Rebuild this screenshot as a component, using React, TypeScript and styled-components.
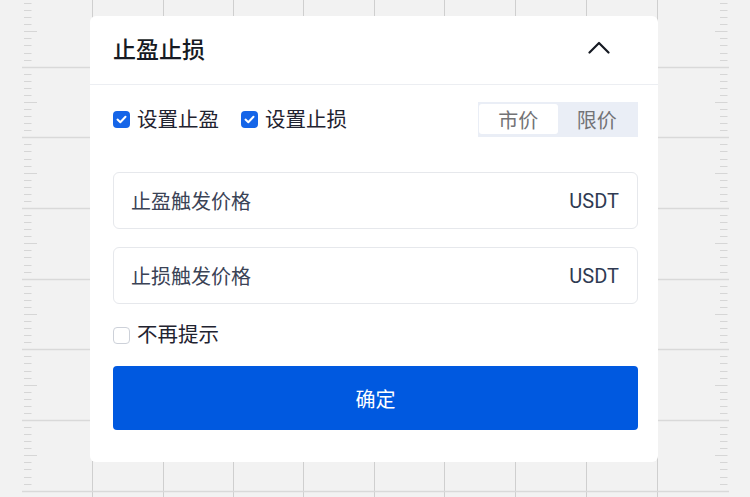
import { useState } from 'react';
import styled, { createGlobalStyle } from 'styled-components';

const GlobalStyle = createGlobalStyle`
  html, body {
    margin: 0;
    padding: 0;
    background: #f2f2f2;
  }
  body {
    font-family: Roboto, 'Noto Sans CJK SC', sans-serif;
  }
`;

const Stage = styled.div`
  position: relative;
  width: 750px;
  height: 497px;
  overflow: hidden;
  background: #f2f2f2;
  padding: 16px 0 0 90px;
  box-sizing: border-box;
`;

const ChartBack = styled.svg`
  position: absolute;
  inset: 0;
  width: 750px;
  height: 497px;
`;

const Card = styled.section`
  position: relative;
  width: 568px;
  background: #ffffff;
  border-radius: 6px;
  box-sizing: border-box;
`;

const Header = styled.header`
  height: 69px;
  display: flex;
  align-items: center;
  justify-content: space-between;
  padding: 0 48px 5px 23px;
  box-sizing: border-box;
  border-bottom: 1px solid #eceef2;
`;

const Title = styled.h1`
  margin: 0;
  font-size: 23px;
  font-weight: 500;
  color: #161a23;
  letter-spacing: 0;
`;

const Collapse = styled.button`
  border: none;
  background: none;
  padding: 0;
  width: 22px;
  height: 14px;
  display: flex;
  align-items: center;
  justify-content: center;
  cursor: pointer;
`;

const Body = styled.div`
  display: flex;
  flex-direction: column;
  padding: 17px 20px 32px 23px;
`;

const OptionsRow = styled.div`
  height: 35px;
  display: flex;
  align-items: center;
  justify-content: space-between;
`;

const Checks = styled.div`
  display: flex;
  align-items: center;
  gap: 22px;
`;

const CheckItem = styled.label`
  display: flex;
  align-items: center;
  gap: 7px;
  font-size: 20.5px;
  line-height: 20px;
  color: #1f2330;
  cursor: pointer;
  user-select: none;
`;

const Box = styled.span<{ $on: boolean }>`
  width: 17px;
  height: 17px;
  box-sizing: border-box;
  border-radius: 4px;
  display: flex;
  align-items: center;
  justify-content: center;
  background: ${(p) => (p.$on ? '#1565e8' : '#ffffff')};
  border: ${(p) => (p.$on ? 'none' : '1.5px solid #cdd1d9')};
`;

const Segmented = styled.div`
  display: flex;
  width: 160px;
  height: 35px;
  padding: 2px 2px 3px 1px;
  box-sizing: border-box;
  background: #eaeef6;
`;

const Segment = styled.button<{ $active: boolean }>`
  flex: 1;
  border: none;
  border-radius: 3px;
  padding: 0;
  font-family: inherit;
  font-size: 20px;
  color: #737376;
  background: ${(p) => (p.$active ? '#ffffff' : 'transparent')};
  cursor: pointer;
`;

const Fields = styled.div`
  display: flex;
  flex-direction: column;
  gap: 18px;
  margin-top: 35px;
`;

const Field = styled.div`
  height: 57px;
  display: flex;
  align-items: center;
  justify-content: space-between;
  padding: 0 18px 0 17px;
  box-sizing: border-box;
  border: 1px solid #e6e8ec;
  border-radius: 6px;
  font-size: 20px;
`;

const FieldLabel = styled.span`
  color: #3b4356;
`;

const Unit = styled.span`
  color: #2f3a52;
`;

const RememberRow = styled.div`
  margin-top: 21px;
  height: 20px;
  display: flex;
  align-items: center;
`;

const Confirm = styled.button`
  margin-top: 21px;
  height: 64px;
  border: none;
  border-radius: 4px;
  background: #0059e0;
  color: #ffffff;
  font-family: inherit;
  font-size: 20px;
  cursor: pointer;
`;

function Tick() {
  return (
    <svg width="11" height="9" viewBox="0 0 11 9">
      <path d="M1.5 4.6 L4.3 7.2 L9.5 1.8" fill="none" stroke="#fff" strokeWidth="2" strokeLinecap="round" strokeLinejoin="round" />
    </svg>
  );
}

function Check({ on, label, onToggle }: { on: boolean; label: string; onToggle: () => void }) {
  return (
    <CheckItem onClick={onToggle}>
      <Box $on={on} role="checkbox" aria-checked={on}>
        {on ? <Tick /> : null}
      </Box>
      {label}
    </CheckItem>
  );
}

function GridChart() {
  const cols = [92, 163, 233, 303, 374, 444, 515, 586, 657];
  const step = 70.67 / 10;
  const ticks = [];
  for (let n = 0; n < 72; n++) {
    const y = Math.round(-4 + step * n) + 0.5;
    if (n % 10 === 0) {
      ticks.push(<line key={`h${n}`} x1={22} x2={729} y1={y} y2={y} stroke="#d9d9d9" strokeWidth={1.5} />);
      continue;
    }
    const long = n % 10 === 5;
    ticks.push(<line key={`l${n}`} x1={24} x2={long ? 37 : 31.5} y1={y} y2={y} stroke="#d6d6d6" strokeWidth={1} />);
    ticks.push(<line key={`r${n}`} x1={long ? 715 : 720} x2={727.5} y1={y} y2={y} stroke="#d6d6d6" strokeWidth={1} />);
  }
  return (
    <ChartBack viewBox="0 0 750 497">
      {cols.map((x) => (
        <line key={x} x1={x + 0.5} x2={x + 0.5} y1={0} y2={497} stroke="#cfcfcf" strokeWidth={1} />
      ))}
      {ticks}
    </ChartBack>
  );
}

export default function App() {
  const [takeProfit, setTakeProfit] = useState(true);
  const [stopLoss, setStopLoss] = useState(true);
  const [noRemind, setNoRemind] = useState(false);
  const [mode, setMode] = useState<'market' | 'limit'>('market');

  return (
    <>
      <GlobalStyle />
      <Stage>
        <GridChart />
        <Card>
          <Header>
            <Title>止盈止损</Title>
            <Collapse aria-label="收起">
              <svg width="22" height="13" viewBox="0 0 22 13">
                <path d="M1.5 11.5 L11 2 L20.5 11.5" fill="none" stroke="#161a23" strokeWidth="2.2" strokeLinecap="round" strokeLinejoin="round" />
              </svg>
            </Collapse>
          </Header>
          <Body>
            <OptionsRow>
              <Checks>
                <Check on={takeProfit} label="设置止盈" onToggle={() => setTakeProfit(!takeProfit)} />
                <Check on={stopLoss} label="设置止损" onToggle={() => setStopLoss(!stopLoss)} />
              </Checks>
              <Segmented>
                <Segment $active={mode === 'market'} onClick={() => setMode('market')}>市价</Segment>
                <Segment $active={mode === 'limit'} onClick={() => setMode('limit')}>限价</Segment>
              </Segmented>
            </OptionsRow>
            <Fields>
              <Field>
                <FieldLabel>止盈触发价格</FieldLabel>
                <Unit>USDT</Unit>
              </Field>
              <Field>
                <FieldLabel>止损触发价格</FieldLabel>
                <Unit>USDT</Unit>
              </Field>
            </Fields>
            <RememberRow>
              <Check on={noRemind} label="不再提示" onToggle={() => setNoRemind(!noRemind)} />
            </RememberRow>
            <Confirm>确定</Confirm>
          </Body>
        </Card>
      </Stage>
    </>
  );
}
